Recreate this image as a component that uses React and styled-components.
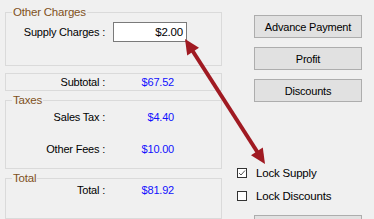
import React from 'react';
import styled, { createGlobalStyle } from 'styled-components';

const GlobalStyle = createGlobalStyle`
  html, body {
    margin: 0;
    padding: 0;
    background: #f0f0f0;
  }
  body {
    font-family: "Liberation Sans", Arial, sans-serif;
    font-size: 11px;
    color: #000;
  }
`;

const Page = styled.div`
  position: relative;
  display: flex;
  width: 374px;
  height: 219px;
  overflow: hidden;
  background: #f0f0f0;
  letter-spacing: -0.2px;
`;

const LeftColumn = styled.div`
  display: flex;
  flex-direction: column;
  width: 217px;
  padding: 12px 0 0 5px;
`;

const Group = styled.div`
  position: relative;
  box-sizing: border-box;
  height: ${p => p.h}px;
  margin-top: ${p => p.mt || 0}px;
  padding-top: ${p => p.pt || 0}px;
  border: 1px solid #dadada;
  display: flex;
  flex-direction: column;
  gap: ${p => p.gap || 0}px;
`;

const Legend = styled.span`
  position: absolute;
  top: -8px;
  left: 6px;
  padding: 0 1px;
  line-height: 14px;
  font-size: 11.5px;
  color: #80501c;
  background: #f0f0f0;
`;

const SumBox = styled.div`
  box-sizing: border-box;
  height: 18px;
  margin-top: 7px;
  border: 1px solid #dadada;
  display: flex;
  align-items: center;
`;

const Row = styled.div`
  display: flex;
  align-items: center;
  line-height: 14px;
`;

const Label = styled.span`
  width: 99px;
  text-align: right;
  flex-shrink: 0;
`;

const Value = styled.span`
  width: 61px;
  margin-left: 8px;
  text-align: right;
  color: #1010ff;
`;

const TextBox = styled.div`
  box-sizing: border-box;
  width: 74px;
  height: 20px;
  margin-left: 8px;
  padding-right: 3px;
  border: 1px solid #7a7a7a;
  background: #fff;
  text-align: right;
  line-height: 18px;
  font-size: 11.5px;
`;

const RightColumn = styled.div`
  display: flex;
  flex-direction: column;
  padding: 15px 0 0 15px;
`;

const Buttons = styled.div`
  display: flex;
  flex-direction: column;
  gap: 9px;
  margin-left: 17px;
`;

const Button = styled.div`
  box-sizing: border-box;
  width: 108px;
  height: 23px;
  border: 1px solid #adadad;
  background: #e1e1e1;
  display: flex;
  align-items: center;
  justify-content: center;
  margin-top: ${p => p.mt || 0}px;
`;

const Checks = styled.div`
  display: flex;
  flex-direction: column;
  gap: 13px;
  margin-top: 66px;
`;

const CheckRow = styled.div`
  display: flex;
  align-items: flex-start;
  height: 10px;
`;

const Box = styled.span`
  box-sizing: border-box;
  width: 10px;
  height: 10px;
  border: 1px solid #333;
  background: #fff;
  display: flex;
  align-items: center;
  justify-content: center;
`;

const CheckText = styled.span`
  margin-left: 9px;
  margin-top: -1px;
  line-height: 13px;
  font-size: 11.5px;
`;

const Overlay = styled.svg`
  position: absolute;
  left: 0;
  top: 0;
  pointer-events: none;
`;

function Check({ checked, children }) {
  return (
    <CheckRow>
      <Box>
        {checked && (
          <svg width="8" height="8" viewBox="0 0 8 8">
            <path d="M1 4 L3 6 L7 1.5" fill="none" stroke="#555" strokeWidth="1" />
          </svg>
        )}
      </Box>
      <CheckText>{children}</CheckText>
    </CheckRow>
  );
}

export default function App() {
  return (
    <Page>
      <GlobalStyle />
      <LeftColumn>
        <Group h={54} pt={9}>
          <Legend>Other Charges</Legend>
          <Row>
            <Label>Supply Charges :</Label>
            <TextBox>$2.00</TextBox>
          </Row>
        </Group>
        <SumBox>
          <Label>Subtotal :</Label>
          <Value>$67.52</Value>
        </SumBox>
        <Group h={69} mt={9} pt={9} gap={18}>
          <Legend>Taxes</Legend>
          <Row>
            <Label>Sales Tax :</Label>
            <Value>$4.40</Value>
          </Row>
          <Row>
            <Label>Other Fees :</Label>
            <Value>$10.00</Value>
          </Row>
        </Group>
        <Group h={41} mt={9} pt={4}>
          <Legend>Total</Legend>
          <Row>
            <Label>Total :</Label>
            <Value>$81.92</Value>
          </Row>
        </Group>
      </LeftColumn>
      <RightColumn>
        <Buttons>
          <Button>Advance Payment</Button>
          <Button>Profit</Button>
          <Button>Discounts</Button>
        </Buttons>
        <Checks>
          <Check checked>Lock Supply</Check>
          <Check>Lock Discounts</Check>
        </Checks>
        <Buttons>
          <Button mt={14}>&nbsp;</Button>
        </Buttons>
      </RightColumn>
      <Overlay width="374" height="219" viewBox="0 0 374 219">
        <g fill="#a01a22" stroke="none">
          <line x1="192" y1="50" x2="258" y2="153" stroke="#a01a22" strokeWidth="4" />
          <polygon points="185,39 187.2,55.4 199,47.8" />
          <polygon points="265,164 251,155.2 262.8,147.6" />
        </g>
      </Overlay>
    </Page>
  );
}
